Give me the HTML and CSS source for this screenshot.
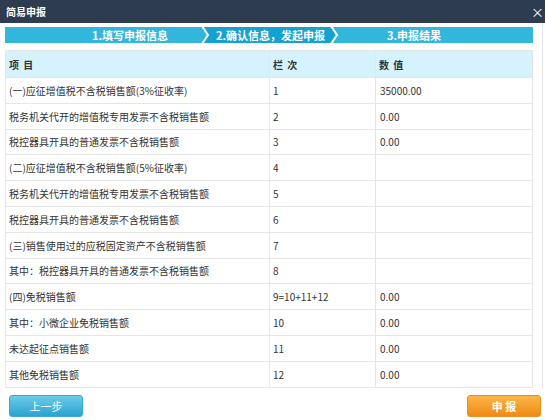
FILE: index.html
```html
<!DOCTYPE html>
<html lang="zh-CN">
<head>
<meta charset="utf-8">
<title>简易申报</title>
<link rel="stylesheet" href="styles.css">
</head>
<body>
<div class="dialog">
  <div class="titlebar">
    <span class="title">简易申报</span>
    <span class="close">×</span>
  </div>
  <div class="panel">
    <div class="steps">
      <div class="step step-1">1.填写申报信息</div>
      <svg class="chev" viewBox="0 0 10 16" width="10" height="16"><rect width="10" height="16" fill="#16a2cf"/><polygon points="0,0 6,8 0,16" fill="#33b6db"/><polyline points="1,-1 7,8 1,17" fill="none" stroke="#fff" stroke-width="2"/></svg>
      <div class="step step-2 active">2.确认信息，发起申报</div>
      <svg class="chev" viewBox="0 0 10 16" width="10" height="16"><rect width="10" height="16" fill="#33b6db"/><polygon points="0,0 6,8 0,16" fill="#16a2cf"/><polyline points="1,-1 7,8 1,17" fill="none" stroke="#fff" stroke-width="2"/></svg>
      <div class="step step-3">3.申报结果</div>
    </div>
    <table class="grid">
      <thead>
        <tr><th class="c1">项&nbsp;目</th><th class="c2">栏&nbsp;次</th><th class="c3">数&nbsp;值</th></tr>
      </thead>
      <tbody>
        <tr><td>(一)应征增值税不含税销售额(3%征收率)</td><td>1</td><td>35000.00</td></tr>
        <tr><td>税务机关代开的增值税专用发票不含税销售额</td><td>2</td><td>0.00</td></tr>
        <tr><td>税控器具开具的普通发票不含税销售额</td><td>3</td><td>0.00</td></tr>
        <tr><td>(二)应征增值税不含税销售额(5%征收率)</td><td>4</td><td></td></tr>
        <tr><td>税务机关代开的增值税专用发票不含税销售额</td><td>5</td><td></td></tr>
        <tr><td>税控器具开具的普通发票不含税销售额</td><td>6</td><td></td></tr>
        <tr><td>(三)销售使用过的应税固定资产不含税销售额</td><td>7</td><td></td></tr>
        <tr><td>其中：税控器具开具的普通发票不含税销售额</td><td>8</td><td></td></tr>
        <tr><td>(四)免税销售额</td><td>9=10+11+12</td><td>0.00</td></tr>
        <tr><td>其中：小微企业免税销售额</td><td>10</td><td>0.00</td></tr>
        <tr><td>未达起征点销售额</td><td>11</td><td>0.00</td></tr>
        <tr><td>其他免税销售额</td><td>12</td><td>0.00</td></tr>
      </tbody>
    </table>
  </div>
  <div class="footer">
    <button class="btn btn-prev">上一步</button>
    <button class="btn btn-submit">申 报</button>
  </div>
</div>
</body>
</html>
```

FILE: styles.css
```css
* { box-sizing: border-box; }
html, body { margin: 0; padding: 0; background: #fff; }
body {
  font-family: "Noto Sans CJK SC", "Noto Sans", sans-serif;
  font-size: 10px;
  color: #333;
}
.dialog { width: 545px; height: 420px; overflow: hidden; }
.titlebar {
  height: 23px;
  background: #2e3c4f;
  display: flex;
  align-items: center;
  justify-content: space-between;
  padding-left: 6px;
  padding-right: 1px;
  overflow: hidden;
}
.title { color: #fff; font-weight: bold; font-size: 10px; }
.close { color: #fff; font-size: 13px; line-height: 1; }
.panel {
  width: 543px;
  height: 366px;
  border-right: 1px solid #e4e4e4;
  padding: 4px 9px 0 5px;
  overflow: hidden;
}
.steps {
  display: flex;
  height: 16px;
  color: #fff;
  font-weight: bold;
  font-size: 11px;
  line-height: 16px;
}
.step { height: 16px; white-space: nowrap; background: #33b6db; }
.step-1 { width: 196px; padding-left: 87px; }
.step-2 { width: 119px; text-align: center; background: #16a2cf; }
.step-3 { flex: 1; padding-left: 47px; }
.chev { display: block; flex: none; }
.grid {
  margin-top: 7px;
  width: 528px;
  border-collapse: collapse;
  table-layout: fixed;
  border: 1px solid #e2e2e2;
}
.grid th, .grid td {
  border: 1px solid #e6e6e6;
  text-align: left;
  padding: 0 0 0 3px;
  white-space: nowrap;
  overflow: hidden;
  font-weight: normal;
}
.grid th {
  background: #d6f3fd;
  height: 27px;
  font-weight: bold;
  color: #333;
  word-spacing: 2px;
}
.grid td { height: 25.8px; }
.grid .c1 { width: 264px; }
.grid .c2 { width: 106px; }
.grid td:nth-child(3) { padding-left: 4px; }
.footer {
  display: flex;
  justify-content: space-between;
  padding: 6px 4px 0 9px;
}
.btn {
  width: 74px;
  height: 22px;
  border: 1px solid transparent;
  border-radius: 3px;
  color: #fff;
  font-family: "Noto Sans CJK SC", "Noto Sans", sans-serif;
  font-size: 11px;
  padding: 0;
  cursor: pointer;
}
.btn-prev {
  background: linear-gradient(#6ccbea, #2ba3d1);
  border-color: #3aa9d3;
}
.btn-submit {
  background: linear-gradient(#fbb648, #ee8a14);
  border-color: #e8901e;
  font-weight: bold;
}
```
